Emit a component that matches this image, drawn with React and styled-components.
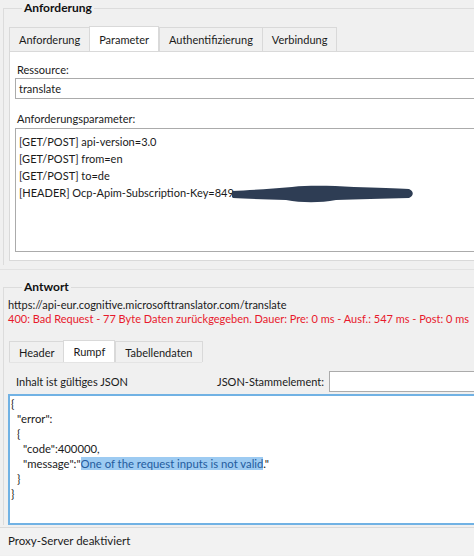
import React from 'react';
import styled, { createGlobalStyle } from 'styled-components';

const GlobalStyle = createGlobalStyle`
  html, body {
    margin: 0;
    padding: 0;
    background: #f0f0f0;
    overflow: hidden;
  }
  body {
    font-family: Lato, "Open Sans", sans-serif;
    font-size: 11px;
    color: #1a1a1a;
  }
`;

const Root = styled.div`
  width: 500px;
  height: 556px;
  display: flex;
  flex-direction: column;
  background: #f0f0f0;
`;

const GroupBox = styled.div`
  margin-top: ${(p) => p.$top}px;
  margin-left: 3px;
  border-top: 1px solid #dcdcdc;
  border-left: 1px solid #dcdcdc;
  padding-left: 5px;
  padding-bottom: ${(p) => p.$bottom || 0}px;
  display: flex;
  flex-direction: column;
`;

const Legend = styled.div`
  align-self: flex-start;
  margin-top: -9px;
  margin-left: 13px;
  padding: 0 2px;
  height: 16px;
  line-height: 16px;
  background: #f0f0f0;
  font-weight: 700;
  font-size: 12px;
  color: #111;
`;

const TabStrip = styled.div`
  display: flex;
  align-items: flex-end;
  height: ${(p) => p.$height}px;
  margin-top: ${(p) => p.$top}px;
`;

const Tab = styled.div`
  height: ${(p) => (p.$active ? p.$h + 1 : p.$h)}px;
  line-height: ${(p) => (p.$active ? p.$h + 1 : p.$h)}px;
  padding: 0 ${(p) => p.$pad}px;
  margin-right: ${(p) => (p.$active ? 0 : -1)}px;
  background: ${(p) => (p.$active ? '#ffffff' : '#f0f0f0')};
  border: 1px solid #d9d9d9;
  border-bottom: none;
  font-size: 11px;
  color: #1a1a1a;
  box-sizing: border-box;
  position: relative;
  z-index: ${(p) => (p.$active ? 1 : 0)};
`;

const Panel = styled.div`
  background: #ffffff;
  border: 1px solid #d9d9d9;
  border-right: none;
  height: 210px;
  box-sizing: border-box;
  padding: 0 0 0 5px;
  display: flex;
  flex-direction: column;
`;

const FieldLabel = styled.div`
  margin-top: ${(p) => p.$top}px;
  margin-left: 2px;
  height: 14px;
  line-height: 14px;
`;

const TextBox = styled.div`
  margin-top: 1px;
  height: 21px;
  line-height: 19px;
  border: 1px solid #ababab;
  border-right: none;
  box-sizing: border-box;
  padding-left: 3px;
  background: #fff;
`;

const ListBox = styled.div`
  margin-top: 2px;
  height: 124px;
  border: 1px solid #ababab;
  border-right: none;
  box-sizing: border-box;
  padding: 4px 0 0 3px;
  background: #fff;
`;

const ListItem = styled.div`
  height: 17px;
  line-height: 17px;
  display: flex;
  align-items: center;
  white-space: nowrap;
`;

const Redaction = styled.svg`
  display: block;
  margin-left: -2px;
  margin-top: 2px;
`;

const Splitter = styled.div`
  margin-top: 4px;
  height: 1px;
  background: #e2e2e2;
`;

const InfoLine = styled.div`
  margin-top: ${(p) => p.$top}px;
  margin-left: -1px;
  height: 14px;
  line-height: 14px;
  white-space: nowrap;
  font-size: 11px;
  color: ${(p) => (p.$error ? '#e8192c' : '#1a1a1a')};
`;

const ResponseTabs = styled(TabStrip)`
  border-bottom: 1px solid #e4e4e4;
  align-self: flex-start;
`;

const OptionsRow = styled.div`
  margin-top: 8px;
  height: 21px;
  display: grid;
  grid-template-columns: 208px auto 1fr;
  align-items: center;
`;

const OptionText = styled.div`
  padding-left: ${(p) => p.$pad || 0}px;
  font-size: 11px;
`;

const RootInput = styled.div`
  margin-left: 5px;
  height: 21px;
  border: 1px solid #ababab;
  border-right: none;
  box-sizing: border-box;
  background: #fff;
`;

const JsonArea = styled.div`
  margin-top: 2px;
  margin-left: -1px;
  height: 131px;
  box-sizing: border-box;
  border: 2px solid #71b2e4;
  border-right: none;
  background: #fff;
  padding-left: 1px;
  font-size: 11.3px;
`;

const JsonLine = styled.div`
  height: 15px;
  line-height: 15px;
  padding-left: ${(p) => p.$indent * 6}px;
  white-space: pre;
`;

const Selected = styled.span`
  background: #9dcbf2;
  color: #245c9e;
`;

const StatusBar = styled.div`
  margin-top: 2px;
  border-top: 1px solid #dadada;
  height: 27px;
  line-height: 26px;
  padding-left: 8px;
  font-size: 11.5px;
  background: #f2f2f2;
`;

const requestTabs = ['Anforderung', 'Parameter', 'Authentifizierung', 'Verbindung'];
const responseTabs = ['Header', 'Rumpf', 'Tabellendaten'];

const params = [
  '[GET/POST] api-version=3.0',
  '[GET/POST] from=en',
  '[GET/POST] to=de',
];

const App = () => {
  return (
    <Root>
      <GlobalStyle />
      <GroupBox $top={8} $bottom={4}>
        <Legend>Anforderung</Legend>
        <TabStrip $height={25} $top={10}>
          {requestTabs.map((t) => (
            <Tab key={t} $h={24} $pad={9} $active={t === 'Parameter'}>
              {t}
            </Tab>
          ))}
        </TabStrip>
        <Panel>
          <FieldLabel $top={11}>Ressource:</FieldLabel>
          <TextBox>translate</TextBox>
          <FieldLabel $top={13}>Anforderungsparameter:</FieldLabel>
          <ListBox>
            {params.map((p) => (
              <ListItem key={p}>{p}</ListItem>
            ))}
            <ListItem>
              [HEADER] Ocp-Apim-Subscription-Key=849
              <Redaction width="182" height="20" viewBox="0 0 182 20">
                <path
                  d="M0 7 C18 6 40 5 60 3 C80 1 100 2 122 3 C145 4 165 4 177 5 C182 7 182 12 177 14 C150 15 125 15 104 16 C88 19 70 19 54 16 C34 15 14 15 1 14 C-1 12 -1 9 0 7 Z"
                  fill="#2e3d54"
                />
              </Redaction>
            </ListItem>
          </ListBox>
        </Panel>
      </GroupBox>
      <Splitter />
      <GroupBox $top={17}>
        <Legend>Antwort</Legend>
        <InfoLine $top={3}>https://api-eur.cognitive.microsofttranslator.com/translate</InfoLine>
        <InfoLine $top={0} $error>
          400: Bad Request - 77 Byte Daten zurückgegeben. Dauer: Pre: 0 ms - Ausf.: 547 ms - Post: 0 ms
        </InfoLine>
        <ResponseTabs $height={22} $top={14}>
          {responseTabs.map((t) => (
            <Tab key={t} $h={21} $pad={9} $active={t === 'Rumpf'}>
              {t}
            </Tab>
          ))}
        </ResponseTabs>
        <OptionsRow>
          <OptionText $pad={7}>Inhalt ist gültiges JSON</OptionText>
          <OptionText>JSON-Stammelement:</OptionText>
          <RootInput />
        </OptionsRow>
        <JsonArea>
          <JsonLine $indent={0}>{'{'}</JsonLine>
          <JsonLine $indent={1}>"error":</JsonLine>
          <JsonLine $indent={1}>{'{'}</JsonLine>
          <JsonLine $indent={2}>"code":400000,</JsonLine>
          <JsonLine $indent={2}>
            "message":"<Selected>One of the request inputs is not valid</Selected>."
          </JsonLine>
          <JsonLine $indent={1}>{'}'}</JsonLine>
          <JsonLine $indent={0}>{'}'}</JsonLine>
        </JsonArea>
      </GroupBox>
      <StatusBar>Proxy-Server deaktiviert</StatusBar>
    </Root>
  );
};

export default App;
